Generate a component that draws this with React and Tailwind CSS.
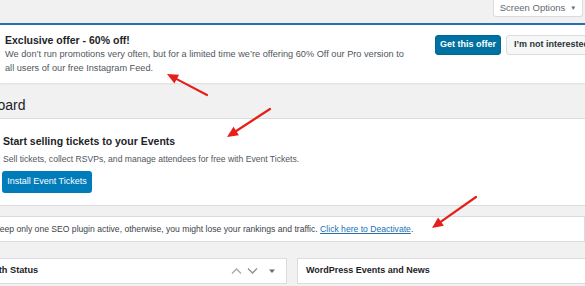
import React from "react";

function Arrow({ x1, y1, x2, y2 }) {
  const dx = x2 - x1, dy = y2 - y1;
  const len = Math.hypot(dx, dy);
  const ux = dx / len, uy = dy / len;
  const hl = 11, hw = 5;
  const bx = x2 - ux * hl, by = y2 - uy * hl;
  const p1 = `${bx - uy * hw},${by + ux * hw}`;
  const p2 = `${bx + uy * hw},${by - ux * hw}`;
  return (
    <g>
      <line x1={x1} y1={y1} x2={bx} y2={by} stroke="#e5201b" strokeWidth="2.2" strokeLinecap="round" />
      <polygon points={`${x2},${y2} ${p1} ${p2}`} fill="#e5201b" />
    </g>
  );
}

export default function App() {
  return (
    <div
      className="relative w-[585px] h-[286px] overflow-hidden bg-[#f1f1f1] text-[#3c434a] whitespace-nowrap"
      style={{ fontFamily: '"Liberation Sans", Arial, sans-serif' }}
    >
      {/* top bar */}
      <div className="h-[23px] flex justify-end pr-[2px]">
        <div className="h-[17px] w-[90px] bg-white border border-t-0 border-[#dcdcde] rounded-b-[3px] flex items-center justify-center gap-[5px] text-[9.5px] text-[#646970]">
          <span>Screen Options</span>
          <span className="text-[6px]">▼</span>
        </div>
      </div>

      {/* offer notice */}
      <div className="h-[60px] bg-white border-t-2 border-[#2271b1] shadow-[0_1px_2px_rgba(0,0,0,0.08)] flex justify-between pl-[5px]">
        <div className="pt-[9px]">
          <div className="text-[10.5px] font-bold text-[#1d2327] leading-[13px]">Exclusive offer - 60% off!</div>
          <div className="text-[9.2px] leading-[14px] text-[#50575e]">
            We don’t run promotions very often, but for a limited time we’re offering 60% Off our Pro version to
            <br />
            all users of our free Instagram Feed.
          </div>
        </div>
        <div className="flex gap-[5px] pt-[10px] shrink-0 -mr-[10px]">
          <div className="h-[20px] w-[66px] bg-[#0071a1] rounded-[3px] border border-[#006799] text-white text-[9px] font-bold flex items-center justify-center">
            Get this offer
          </div>
          <div className="h-[20px] w-[89px] bg-[#f6f7f7] rounded-[3px] border border-[#dcdcde] text-[#2c3338] text-[9px] font-bold flex items-center pl-[7px]">
            I’m not interested
          </div>
        </div>
      </div>

      {/* heading */}
      <div className="h-[35px] flex items-center -ml-[43px] text-[14px] text-[#1d2327] pt-[9px]">Dashboard</div>

      {/* event tickets */}
      <div className="h-[88px] bg-white border-y border-[#dcdcde] pl-[3px] pt-[15px]">
        <div className="text-[10.5px] font-bold text-[#1d2327] leading-[14px]">Start selling tickets to your Events</div>
        <div className="text-[8.6px] text-[#50575e] mt-[5px] leading-[12px]">
          Sell tickets, collect RSVPs, and manage attendees for free with Event Tickets.
        </div>
        <div className="mt-[6px] h-[22px] w-[90px] -ml-[1px] bg-[#007cba] rounded-[3px] text-white text-[9px] flex items-center justify-center">
          Install Event Tickets
        </div>
      </div>

      {/* seo notice */}
      <div className="mt-[10px] h-[26px] bg-white border border-[#dcdcde] flex items-center -ml-[7px] text-[8.6px] text-[#3c434a]">
        <span>
          Keep only one SEO plugin active, otherwise, you might lose your rankings and traffic.{" "}
          <span className="text-[#2271b1] underline">Click here to Deactivate</span>.
        </span>
      </div>

      {/* postboxes */}
      <div className="mt-[16px] flex gap-[10px]">
        <div className="w-[287px] h-[26px] bg-white border border-[#dcdcde] border-l-0 flex items-center shrink-0">
          <div className="-ml-[40px] text-[9.2px] font-bold text-[#1d2327] flex-1">Site Health Status</div>
          <div className="flex items-center gap-[5px] pr-[9px] text-[#8c8f94]">
            <svg width="11" height="8" viewBox="0 0 11 8"><path d="M1 6.5 L5.5 2 L10 6.5" fill="none" stroke="#a7aaad" strokeWidth="1.3" /></svg>
            <svg width="11" height="8" viewBox="0 0 11 8"><path d="M1 1.5 L5.5 6 L10 1.5" fill="none" stroke="#8c8f94" strokeWidth="1.3" /></svg>
            <svg width="10" height="8" viewBox="0 0 10 8" className="ml-[4px]"><path d="M2 2.5 L8 2.5 L5 6 Z" fill="#646970" /></svg>
          </div>
        </div>
        <div className="flex-1 h-[26px] bg-white border border-[#dcdcde] border-r-0 flex items-center pl-[8px] shrink-0">
          <div className="text-[9px] font-bold text-[#1d2327]">WordPress Events and News</div>
        </div>
      </div>

      <svg className="absolute inset-0 pointer-events-none" width="585" height="286">
        <Arrow x1={207} y1={95} x2={167} y2={74} />
        <Arrow x1={270} y1={109} x2={227} y2={137} />
        <Arrow x1={476} y1={197} x2={432} y2={228} />
      </svg>
    </div>
  );
}
